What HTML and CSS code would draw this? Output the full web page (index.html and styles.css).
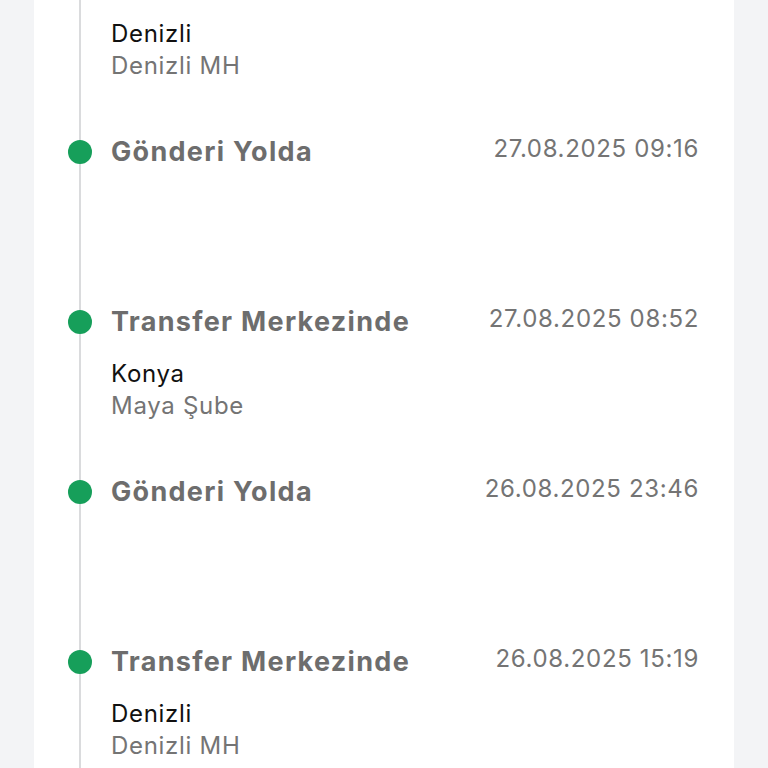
FILE: index.html
```html
<!DOCTYPE html>
<html lang="tr">
<head>
    <meta charset="UTF-8">
    <meta name="viewport" content="width=device-width, initial-scale=1.0">
    <title>Gönderi Hareketleri</title>
    <link rel="stylesheet" href="styles.css">
</head>
<body>
    <div class="card">
        <ul class="timeline">
            <li class="event">
                <span class="dot"></span>
                <div class="event-body">
                    <div class="event-head">
                        <h4>Transfer Merkezinde</h4>
                        <span class="date">27.08.2025 10:05</span>
                    </div>
                    <div class="place">
                        <p class="city">Denizli</p>
                        <p class="branch">Denizli MH</p>
                    </div>
                </div>
            </li>
            <li class="event">
                <span class="dot"></span>
                <div class="event-body">
                    <div class="event-head">
                        <h4>Gönderi Yolda</h4>
                        <span class="date">27.08.2025 09:16</span>
                    </div>
                </div>
            </li>
            <li class="event">
                <span class="dot"></span>
                <div class="event-body">
                    <div class="event-head">
                        <h4>Transfer Merkezinde</h4>
                        <span class="date">27.08.2025 08:52</span>
                    </div>
                    <div class="place">
                        <p class="city">Konya</p>
                        <p class="branch">Maya Şube</p>
                    </div>
                </div>
            </li>
            <li class="event">
                <span class="dot"></span>
                <div class="event-body">
                    <div class="event-head">
                        <h4>Gönderi Yolda</h4>
                        <span class="date">26.08.2025 23:46</span>
                    </div>
                </div>
            </li>
            <li class="event">
                <span class="dot"></span>
                <div class="event-body">
                    <div class="event-head">
                        <h4>Transfer Merkezinde</h4>
                        <span class="date">26.08.2025 15:19</span>
                    </div>
                    <div class="place">
                        <p class="city">Denizli</p>
                        <p class="branch">Denizli MH</p>
                    </div>
                </div>
            </li>
        </ul>
    </div>
</body>
</html>
```

FILE: styles.css
```css
:root {
    --background: #f3f4f6;
    --green: #169f5a;
    --line: #dadbdd;
    --title: #6d6d6d;
    --muted: #747474;
    --text: #111;
}

* {
    box-sizing: border-box;
    margin: 0;
    padding: 0;
}

html, body {
    height: 100%;
    overflow: hidden;
}

body {
    font-family: Inter, "Noto Sans", sans-serif;
    background: var(--background);
    color: var(--text);
}

.card {
    background: white;
    width: 700px;
    min-height: 100%;
    margin-left: 34px;
    padding: 0 35px 0 34px;
}

/* page is scrolled down: first event starts above the viewport */
.timeline {
    list-style: none;
    position: relative;
    margin-top: -35px;
}

.timeline::before {
    content: "";
    position: absolute;
    top: 0;
    bottom: 0;
    left: 11px;
    width: 2px;
    background: var(--line);
}

.event {
    display: flex;
    gap: 19px;
    min-height: 170px;
}

.dot {
    position: relative;
    flex: 0 0 24px;
    width: 24px;
    height: 24px;
    margin-top: 5px;
    border-radius: 50%;
    background: var(--green);
}

.event-body {
    flex: 1;
    display: flex;
    flex-direction: column;
    gap: 20px;
}

.event-head {
    display: flex;
    justify-content: space-between;
    align-items: flex-start;
}

.event-head h4 {
    font-size: 27px;
    line-height: 33px;
    font-weight: 700;
    letter-spacing: 1.3px;
    color: var(--title);
}

.date {
    font-size: 24px;
    line-height: 27px;
    letter-spacing: 0.65px;
    color: var(--muted);
}

.place p {
    font-size: 24px;
    line-height: 32px;
    letter-spacing: 0.7px;
}

.city {
    color: var(--text);
}

.branch {
    color: var(--muted);
}
```
